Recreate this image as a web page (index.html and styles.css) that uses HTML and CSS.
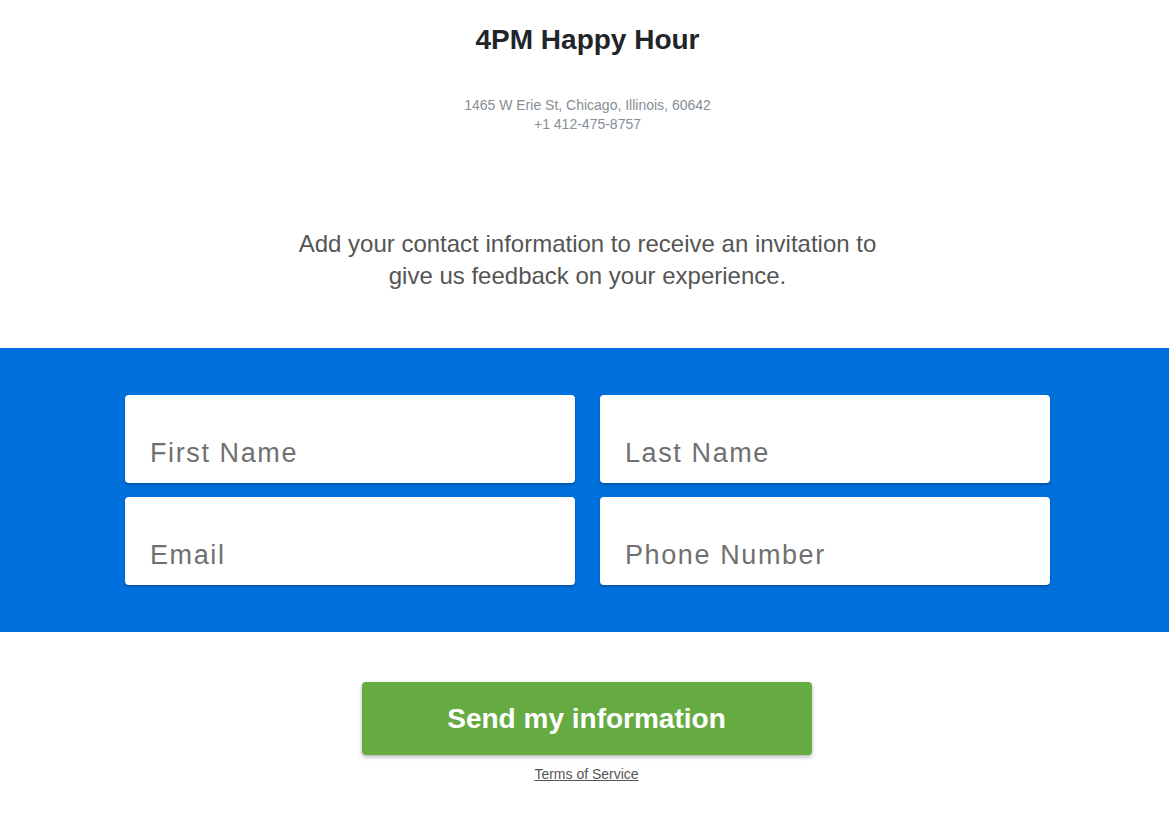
FILE: index.html
```html
<!DOCTYPE html>
<html>
<head>
	<meta charset="utf-8">
	<meta name="viewport" content="width=device-width, initial-scale=1.0">
	<title>4PM Happy Hour</title>
	<link rel="stylesheet" href="styles.css">
</head>
<body class="body">

<div class="header">
	<h1 class="title">4PM Happy Hour</h1>
	<p class="address">1465 W Erie St, Chicago, Illinois, 60642<br>+1 412-475-8757</p>
</div>

<p class="intro">Add your contact information to receive an invitation to give us feedback on your experience.</p>

<form class="form">
	<div class="fields">
		<input type="text" class="field" placeholder="First Name">
		<input type="text" class="field" placeholder="Last Name">
		<input type="email" class="field" placeholder="Email">
		<input type="tel" class="field" placeholder="Phone Number">
	</div>
</form>

<div class="actions">
	<button class="send">Send my information</button>
	<a href="#" class="terms">Terms of Service</a>
</div>

</body>
</html>
```

FILE: styles.css
```css
html,
body {
	margin: 0;
	background: #fff;
	font-family: "Liberation Sans", Arial, sans-serif;
}

.header {
	text-align: center;
	padding: 24px 0 0 6px;
}

.title {
	margin: 0;
	font-size: 28px;
	line-height: 32px;
	font-weight: bold;
	color: #212529;
}

.address {
	margin: 40px 0 0;
	font-size: 14px;
	line-height: 19px;
	color: #868e96;
}

.intro {
	width: 610px;
	margin: 94px auto 0;
	padding-left: 6px;
	text-align: center;
	font-size: 24px;
	line-height: 32px;
	color: #555;
}

.form {
	margin-top: 56px;
	background: #0070dd;
	padding: 47px 0 47px 6px;
}

.fields {
	width: 925px;
	margin: 0 auto;
	display: grid;
	grid-template-columns: 450px 450px;
	column-gap: 25px;
	row-gap: 14px;
}

.field {
	box-sizing: border-box;
	height: 88px;
	border: none;
	border-radius: 4px;
	background: #fff;
	box-shadow: 0 2px 3px rgba(0, 0, 0, .25);
	padding: 28px 25px 0;
	font-family: "Liberation Sans", Arial, sans-serif;
	font-size: 27px;
	letter-spacing: 1.6px;
	color: #333;
	outline: none;
}

.field::placeholder {
	color: #707070;
	opacity: 1;
}

.actions {
	display: flex;
	flex-direction: column;
	align-items: center;
	padding: 50px 0 0 4px;
}

.send {
	width: 450px;
	height: 73px;
	border: none;
	border-radius: 4px;
	background: #66ab42;
	box-shadow: 0 2px 4px rgba(0, 0, 0, .3);
	color: #fff;
	font-family: "Liberation Sans", Arial, sans-serif;
	font-size: 28px;
	font-weight: bold;
	cursor: pointer;
}

.terms {
	margin-top: 11px;
	font-size: 14px;
	line-height: 16px;
	color: #555;
}
```
